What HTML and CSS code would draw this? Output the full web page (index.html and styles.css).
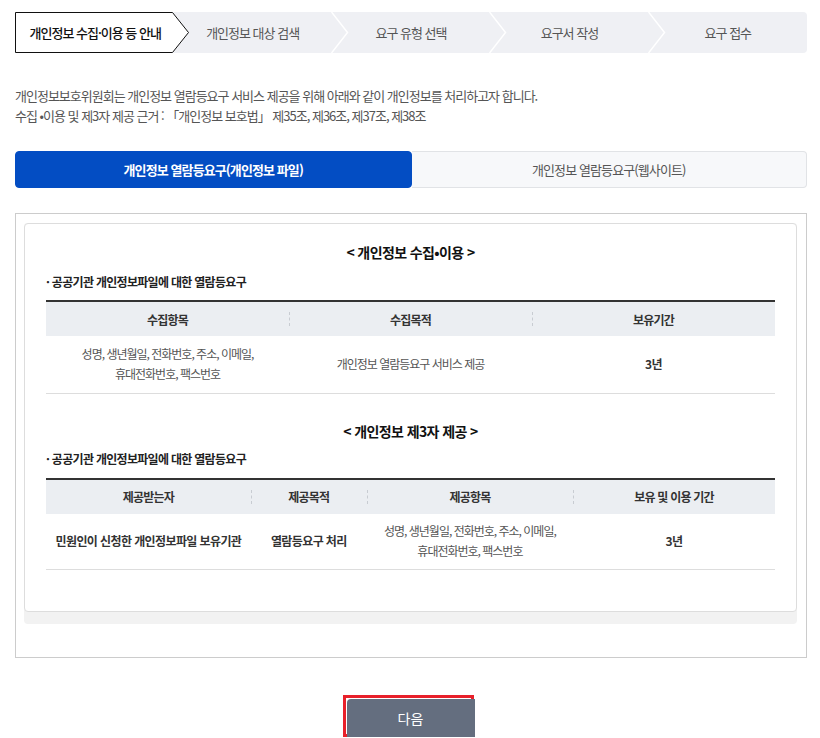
FILE: index.html
```html
<!DOCTYPE html>
<html lang="ko">
<head>
<meta charset="utf-8">
<title>개인정보 열람등요구</title>
<link rel="stylesheet" href="styles.css">
</head>
<body>
<div class="page">
  <ol class="stepper">
    <li class="step step-current">
      <svg class="step-shape" width="175" height="41" viewBox="0 0 175 41"><polygon points="0.5,0.5 157.5,0.5 173.5,20.5 157.5,40.5 0.5,40.5" fill="#fff" stroke="#111" stroke-width="1"/></svg>
      <span class="step-label">개인정보 수집·이용 등 안내</span>
    </li>
    <li class="step">
      <span class="step-label">개인정보 대상 검색</span>
      <svg class="chev" width="18" height="41" viewBox="0 0 18 41"><polyline points="0.5,0 16.5,20.5 0.5,41" fill="none" stroke="#fff" stroke-width="1.5"/></svg>
    </li>
    <li class="step">
      <span class="step-label">요구 유형 선택</span>
      <svg class="chev" width="18" height="41" viewBox="0 0 18 41"><polyline points="0.5,0 16.5,20.5 0.5,41" fill="none" stroke="#fff" stroke-width="1.5"/></svg>
    </li>
    <li class="step">
      <span class="step-label">요구서 작성</span>
      <svg class="chev" width="18" height="41" viewBox="0 0 18 41"><polyline points="0.5,0 16.5,20.5 0.5,41" fill="none" stroke="#fff" stroke-width="1.5"/></svg>
    </li>
    <li class="step">
      <span class="step-label">요구 접수</span>
    </li>
  </ol>

  <div class="intro">
    <p>개인정보보호위원회는 개인정보 열람등요구 서비스 제공을 위해 아래와 같이 개인정보를 처리하고자 합니다.</p>
    <p>수집 •이용 및 제3자 제공 근거 : 「개인정보 보호법」 제35조, 제36조, 제37조, 제38조</p>
  </div>

  <div class="tabs">
    <button class="tab tab-active">개인정보 열람등요구(개인정보 파일)</button>
    <button class="tab">개인정보 열람등요구(웹사이트)</button>
  </div>

  <div class="outer-box">
    <div class="card-wrap">
      <div class="card">
        <h3 class="sec-title">&lt; 개인정보 수집•이용 &gt;</h3>
        <p class="sec-sub">· 공공기관 개인정보파일에 대한 열람등요구</p>
        <table class="info-table t1">
          <colgroup><col class="c-third"><col class="c-third"><col class="c-third"></colgroup>
          <thead>
            <tr><th>수집항목</th><th>수집목적</th><th>보유기간</th></tr>
          </thead>
          <tbody>
            <tr class="row1">
              <td>성명, 생년월일, 전화번호, 주소, 이메일,<br>휴대전화번호, 팩스번호</td>
              <td>개인정보 열람등요구 서비스 제공</td>
              <td class="strong">3년</td>
            </tr>
          </tbody>
        </table>

        <h3 class="sec-title sec-title-2">&lt; 개인정보 제3자 제공 &gt;</h3>
        <p class="sec-sub">· 공공기관 개인정보파일에 대한 열람등요구</p>
        <table class="info-table t2">
          <colgroup><col class="c-a"><col class="c-b"><col class="c-c"><col class="c-d"></colgroup>
          <thead>
            <tr><th>제공받는자</th><th>제공목적</th><th>제공항목</th><th>보유 및 이용 기간</th></tr>
          </thead>
          <tbody>
            <tr class="row2">
              <td class="strong">민원인이 신청한 개인정보파일 보유기관</td>
              <td class="strong">열람등요구 처리</td>
              <td>성명, 생년월일, 전화번호, 주소, 이메일,<br>휴대전화번호, 팩스번호</td>
              <td class="strong">3년</td>
            </tr>
          </tbody>
        </table>
      </div>
    </div>
  </div>

  <div class="actions">
    <span class="focus-ring"><button class="btn-next">다음</button></span>
  </div>
</div>
</body>
</html>
```

FILE: styles.css
```css
* { box-sizing: border-box; }
html, body { margin: 0; padding: 0; background: #fff; }
body {
  font-family: "Noto Sans CJK KR", "Noto Sans", "Liberation Sans", sans-serif;
  color: #333;
  font-size: 13px;
}
.page { padding: 12px 13px 0 15px; }

/* stepper */
.stepper {
  list-style: none;
  margin: 0;
  padding: 0;
  display: flex;
  height: 41px;
  background: #eff0f4;
  border-radius: 0 4px 4px 0;
}
.step {
  flex: 1 1 0;
  position: relative;
  display: flex;
  align-items: center;
  justify-content: center;
  font-size: 13px;
  color: #555;
  letter-spacing: -1px;
}
.step-label { position: relative; z-index: 2; }
.step-current { color: #111; font-weight: 500; }
.step-current .step-label { left: 1px; }
.step-shape { position: absolute; left: 0; top: 0; z-index: 1; overflow: visible; }
.chev { position: absolute; right: -17px; top: 0; z-index: 1; }

/* intro */
.intro { margin-top: 33px; color: #555; font-size: 13px; letter-spacing: -1px; }
.intro p { margin: 0; line-height: 20px; }

/* tabs */
.tabs { display: flex; margin-top: 25px; height: 37px; }
.tab {
  flex: 1 1 0;
  font-family: inherit;
  font-size: 13px;
  letter-spacing: -0.9px;
  border: 1px solid #e1e3e6;
  background: #f7f8fa;
  color: #555;
  border-radius: 0 4px 4px 0;
  border-left: none;
  padding: 0;
  cursor: pointer;
}
.tab-active {
  background: #034dc3;
  border-color: #034dc3;
  color: #fff;
  font-weight: 700;
  border-radius: 4px;
  border-left: 1px solid #034dc3;
}

/* outer box */
.outer-box {
  margin-top: 25px;
  border: 1px solid #ccc;
  padding: 9px 9px 33px 8px;
}
.card-wrap {
  background: #f2f2f2;
  border-radius: 4px;
  padding-bottom: 12px;
}
.card {
  background: #fff;
  border: 1px solid #ddd;
  border-radius: 4px;
  padding: 18px 21px 41px 21px;
}
.sec-title {
  margin: 0;
  text-align: center;
  font-size: 14px;
  line-height: 20px;
  font-weight: 700;
  color: #111;
  letter-spacing: -0.6px;
}
.sec-title-2 { margin-top: 27px; }
.sec-sub {
  margin: 10px 0 0 0;
  font-size: 12px;
  line-height: 20px;
  font-weight: 700;
  color: #222;
  letter-spacing: -0.7px;
}
.sec-title-2 + .sec-sub { margin-top: 8px; }

/* tables */
.info-table {
  width: 100%;
  border-collapse: collapse;
  table-layout: fixed;
  margin-top: 8px;
  border-top: 2px solid #333;
  font-size: 12px;
  letter-spacing: -0.6px;
}
.t2 { margin-top: 9px; }
.c-third { width: 33.333%; }
.c-a { width: 28.1%; }
.c-b { width: 15.9%; }
.c-c { width: 28.3%; }
.c-d { width: 27.7%; }
.info-table th {
  height: 35px;
  background: #ebeef2;
  font-weight: 700;
  color: #333;
  position: relative;
  padding: 0;
  letter-spacing: -0.8px;
}
.info-table th + th::before {
  content: "";
  position: absolute;
  left: 0;
  top: 50%;
  height: 14px;
  margin-top: -7px;
  border-left: 1px dashed #c8ccd2;
}
.info-table td {
  text-align: center;
  color: #555;
  line-height: 20px;
  border-bottom: 1px solid #ddd;
  padding: 0 4px;
  letter-spacing: -1px;
}
.row1 td { height: 57px; }
.row2 td { height: 56px; }
.info-table td.strong { font-weight: 700; color: #333; letter-spacing: -0.6px; }

/* button */
.actions { margin-top: 37px; display: flex; justify-content: center; padding-right: 6px; }
.focus-ring {
  display: inline-flex;
  border: 3px solid #e8202a;
  padding: 1px 0 0 1px;
  height: 42px;
}
.btn-next {
  width: 128px;
  height: 38px;
  margin-right: -4px;
  background: #646e7f;
  color: #fff;
  border: none;
  border-radius: 4px 0 0 0;
  font-family: inherit;
  font-size: 14px;
}
```
